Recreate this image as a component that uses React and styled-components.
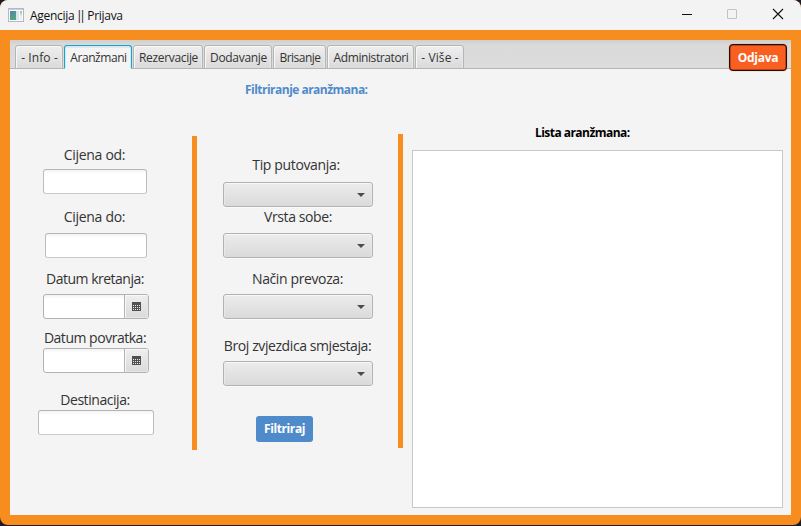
import React from "react";
import styled, { createGlobalStyle, css } from "styled-components";

const ORANGE = "#f78d1e";

const GlobalStyle = createGlobalStyle`
  * { box-sizing: border-box; }
  body {
    margin: 0;
    background: #1e1c22;
    font-family: "Open Sans", "Noto Sans", sans-serif;
    color: #333;
    overflow: hidden;
  }
`;

const Window = styled.div`
  width: 801px;
  height: 525px;
  display: flex;
  flex-direction: column;
  background: ${ORANGE};
  border-radius: 8px;
  overflow: hidden;
`;

const TitleBar = styled.header`
  height: 30px;
  flex: none;
  display: flex;
  align-items: center;
  padding-left: 8px;
  background: #f3f3f3;
`;

const Title = styled.span`
  margin: 1px 0 0 6px;
  font-size: 12px;
  line-height: 18px;
  letter-spacing: -0.3px;
  color: #111;
  white-space: pre;
`;

const TitleBars = styled.span`
  margin: 0 2px 0 -1px;
  letter-spacing: -3.4px;
`;

const WindowButtons = styled.div`
  display: flex;
  margin-left: auto;
`;

const WindowButton = styled.button`
  width: 46px;
  height: 30px;
  padding: 0;
  border: 0;
  background: none;
  color: ${(p) => (p.$muted ? "#c3c3c3" : "#111")};

  svg { display: block; }
`;

const Content = styled.main`
  flex: 1;
  display: flex;
  flex-direction: column;
  margin: 10px;
  background: #f4f4f4;
`;

const TabHeader = styled.nav`
  position: relative;
  height: 29px;
  flex: none;
  display: flex;
  align-items: flex-end;
  gap: 1px;
  padding-left: 5px;
  background: linear-gradient(#cfcfcf 0, #dadada 5px, #dcdcdc 100%);
  box-shadow: inset 0 -1px #b5b5b5;
`;

const Tab = styled.button`
  width: ${(p) => p.$width}px;
  height: 24px;
  padding: 2px 0 0 1px;
  border: 1px solid #b5b5b5;
  border-radius: 3px 3px 0 0;
  background: linear-gradient(#efefef, #dadada);
  box-shadow: inset 1px 1px #f8f8f8, inset -1px 0 #e9e9e9;
  font: 12px/20px "Open Sans", sans-serif;
  letter-spacing: ${(p) => p.$tracking}px;
  color: #333;
  white-space: nowrap;

  ${(p) =>
    p.$selected &&
    css`
      border-color: #1ba1ca;
      border-bottom-color: #f4f4f4;
      background: #f4f4f4;
      box-shadow: inset 1px 1px #d3e9f1, inset -1px 0 #d3e9f1, inset 0 2px #dcebf1;
    `}
`;

const LogoutButton = styled.button`
  position: absolute;
  right: 4px;
  top: 4px;
  width: 58px;
  height: 27px;
  padding: 0;
  border: 1px solid #2a0b02;
  border-radius: 4px;
  background: #f95f20;
  box-shadow: inset 0 0 0 0.5px #7a2a0c, 0 0 1px #d04a14;
  font: 700 12px/25px "Open Sans", sans-serif;
  letter-spacing: -0.3px;
  color: #fff;
`;

const Heading = styled.h1`
  width: 123px;
  margin: 12px 0 0 235px;
  font-size: 12px;
  line-height: 18px;
  letter-spacing: -0.52px;
  color: #4f8bcb;
  white-space: nowrap;
`;

const Columns = styled.div`
  display: flex;
  align-items: flex-start;
`;

const FilterColumn = styled.section`
  width: ${(p) => p.$width}px;
  padding-top: ${(p) => p.$top}px;
  display: flex;
  flex-direction: column;
  align-items: flex-start;
`;

const Divider = styled.div`
  width: 5px;
  height: 314px;
  margin-top: ${(p) => p.$top}px;
  background: ${ORANGE};
`;

const Field = styled.div`
  width: ${(p) => p.$width}px;
  height: ${(p) => p.$height}px;
  margin: 0 0 ${(p) => p.$after || 0}px ${(p) => p.$indent}px;
  display: flex;
  flex-direction: column;
  align-items: center;
  justify-content: space-between;
`;

const Label = styled.label`
  padding-right: ${(p) => p.$offset || 0}px;
  font-size: 14px;
  line-height: 19px;
  letter-spacing: ${(p) => p.$tracking}px;
  white-space: nowrap;
`;

const inputSurface = css`
  border: 1px solid #bcbcbc;
  border-radius: 3px;
  background: linear-gradient(#f3f3f3 0, #fff 4px);
`;

const TextInput = styled.input`
  ${inputSurface}
  width: 100%;
  height: 25px;
  padding: 0 6px;
  border-bottom-color: #cacaca;
  border-top-color: #b5b5b5;
  outline: 0;
`;

const DatePicker = styled.div`
  ${inputSurface}
  width: 100%;
  height: 25px;
  display: flex;
  border-color: #b2b2b2;
  overflow: hidden;
`;

const DateInput = styled.input`
  flex: 1;
  min-width: 0;
  padding: 0;
  border: 0;
  background: none;
  outline: 0;
`;

const CalendarButton = styled.button`
  width: 24px;
  padding: 0;
  display: flex;
  align-items: center;
  justify-content: center;
  border: 0;
  border-left: 1px solid #b2b2b2;
  background: linear-gradient(#efefef, #dadada);
  box-shadow: inset 1px 1px #f8f8f8, inset -1px -1px #e6e6e6;
`;

const ComboBox = styled.button`
  width: 100%;
  height: 25px;
  padding: 0 7px 0 0;
  display: flex;
  align-items: center;
  justify-content: flex-end;
  border: 1px solid #b2b2b2;
  border-radius: 3px;
  background: linear-gradient(#ececec, #dadada);
  box-shadow: inset 0 1px #f7f7f7, inset 1px 0 #e9e9e9, inset -1px 0 #e9e9e9, 0 1px #fafafa;
`;

const FilterButton = styled.button`
  width: 57px;
  height: 26px;
  margin: 30px 0 0 59px;
  padding: 0;
  border: 0;
  border-radius: 3px;
  background: #4f8bcb;
  font: 700 12px/26px "Open Sans", sans-serif;
  letter-spacing: -0.4px;
  color: #fff;
`;

const ListColumn = styled.section`
  padding: 25px 0 0 9px;
`;

const ListTitle = styled.h2`
  margin: 0 0 8px 123px;
  font-size: 12px;
  line-height: 18px;
  letter-spacing: -0.54px;
  color: #000;
  white-space: nowrap;
`;

const ListBox = styled.div`
  width: 371px;
  height: 358px;
  border: 1px solid #c8c8c8;
  background: #fff;
`;

const AppIcon = () => (
  <svg width="16" height="14" viewBox="0 0 16 14">
    <defs>
      <linearGradient id="pane" x1="0" y1="0" x2="0.5" y2="1">
        <stop offset="0" stopColor="#5580b4" />
        <stop offset="1" stopColor="#4fa878" />
      </linearGradient>
      <linearGradient id="side" x1="0" y1="0" x2="0" y2="1">
        <stop offset="0" stopColor="#8fc3a4" />
        <stop offset="0.6" stopColor="#e9eef0" />
      </linearGradient>
    </defs>
    <rect x="0.5" y="0.5" width="15" height="13" fill="#fafafa" stroke="#b3babf" />
    <path d="M1 1.5h14" stroke="#c7d0d7" />
    <rect x="2" y="3" width="6" height="9" fill="url(#pane)" />
    <rect x="8" y="3" width="3" height="9" fill="#dce4e6" />
    <rect x="12" y="3" width="2" height="9" fill="url(#side)" />
  </svg>
);

const CalendarIcon = () => (
  <svg width="9" height="9" viewBox="0 0 9 9" shapeRendering="crispEdges">
    <rect width="9" height="9" fill="#505050" />
    <path
      d="M1 3.5h7M1 5.5h7M1 7.5h7"
      stroke="#e8e8e8"
      strokeDasharray="1 1"
    />
  </svg>
);

const ArrowIcon = () => (
  <svg width="8" height="4" viewBox="0 0 8 4">
    <path d="M0 0h8L4 4z" fill="#4c4c4c" />
  </svg>
);

const tabs = [
  { name: "- Info -", width: 48, tracking: 0.1 },
  { name: "Aranžmani", width: 68, tracking: -0.44, selected: true },
  { name: "Rezervacije", width: 70, tracking: -0.33 },
  { name: "Dodavanje", width: 68, tracking: -0.32 },
  { name: "Brisanje", width: 53, tracking: -0.5 },
  { name: "Administratori", width: 87, tracking: -0.4 },
  { name: "- Više -", width: 49, tracking: 0.1 },
];

const leftFields = [
  { label: "Cijena od:", tracking: -0.3, offset: 1, width: 104, indent: 33, height: 49, after: 13 },
  { label: "Cijena do:", tracking: -0.3, offset: 3, width: 102, indent: 35, height: 51, after: 11 },
  { label: "Datum kretanja:", tracking: -0.5, offset: 2, width: 106, indent: 33, height: 50, after: 9, date: true },
  { label: "Datum povratka:", tracking: -0.48, offset: 2, width: 106, indent: 33, height: 45, after: 17, date: true },
  { label: "Destinacija:", tracking: -0.45, offset: 2, width: 116, indent: 28, height: 45 },
];

const comboFields = [
  { label: "Tip putovanja:", tracking: -0.35, offset: 4, height: 52, after: 0 },
  { label: "Vrsta sobe:", tracking: -0.4, height: 51, after: 11 },
  { label: "Način prevoza:", tracking: -0.38, offset: 1, height: 50, after: 17 },
  { label: "Broj zvjezdica smjestaja:", tracking: -0.41, offset: 1, height: 50 },
];

export default function App() {
  return (
    <>
      <GlobalStyle />
      <Window>
        <TitleBar>
          <AppIcon />
          <Title>
            Agencija <TitleBars>||</TitleBars> Prijava
          </Title>
          <WindowButtons>
            <WindowButton aria-label="Minimize">
              <svg width="46" height="30">
                <path d="M19 14.5h10" stroke="currentColor" />
              </svg>
            </WindowButton>
            <WindowButton aria-label="Maximize" $muted>
              <svg width="46" height="30">
                <rect x="18.5" y="9.5" width="9" height="9" rx="0.5" fill="none" stroke="currentColor" />
              </svg>
            </WindowButton>
            <WindowButton aria-label="Close">
              <svg width="46" height="30">
                <path d="M18 9l10 10M28 9l-10 10" fill="none" stroke="currentColor" strokeWidth="1.1" />
              </svg>
            </WindowButton>
          </WindowButtons>
        </TitleBar>
        <Content>
          <TabHeader>
            {tabs.map((t) => (
              <Tab key={t.name} $width={t.width} $tracking={t.tracking} $selected={t.selected}>
                {t.name}
              </Tab>
            ))}
            <LogoutButton>Odjava</LogoutButton>
          </TabHeader>
          <Heading>Filtriranje aranžmana:</Heading>
          <Columns>
            <FilterColumn $width={182} $top={46}>
              {leftFields.map((f) => (
                <Field key={f.label} $width={f.width} $height={f.height} $indent={f.indent} $after={f.after}>
                  <Label $tracking={f.tracking} $offset={f.offset}>{f.label}</Label>
                  {f.date ? (
                    <DatePicker>
                      <DateInput />
                      <CalendarButton aria-label="Kalendar">
                        <CalendarIcon />
                      </CalendarButton>
                    </DatePicker>
                  ) : (
                    <TextInput />
                  )}
                </Field>
              ))}
            </FilterColumn>
            <Divider $top={37.4} />
            <FilterColumn $width={201} $top={56}>
              {comboFields.map((f) => (
                <Field key={f.label} $width={150} $height={f.height} $indent={26} $after={f.after}>
                  <Label $tracking={f.tracking} $offset={f.offset}>{f.label}</Label>
                  <ComboBox aria-label={f.label}>
                    <ArrowIcon />
                  </ComboBox>
                </Field>
              ))}
              <FilterButton>Filtriraj</FilterButton>
            </FilterColumn>
            <Divider $top={35.4} />
            <ListColumn>
              <ListTitle>Lista aranžmana:</ListTitle>
              <ListBox />
            </ListColumn>
          </Columns>
        </Content>
      </Window>
    </>
  );
}
